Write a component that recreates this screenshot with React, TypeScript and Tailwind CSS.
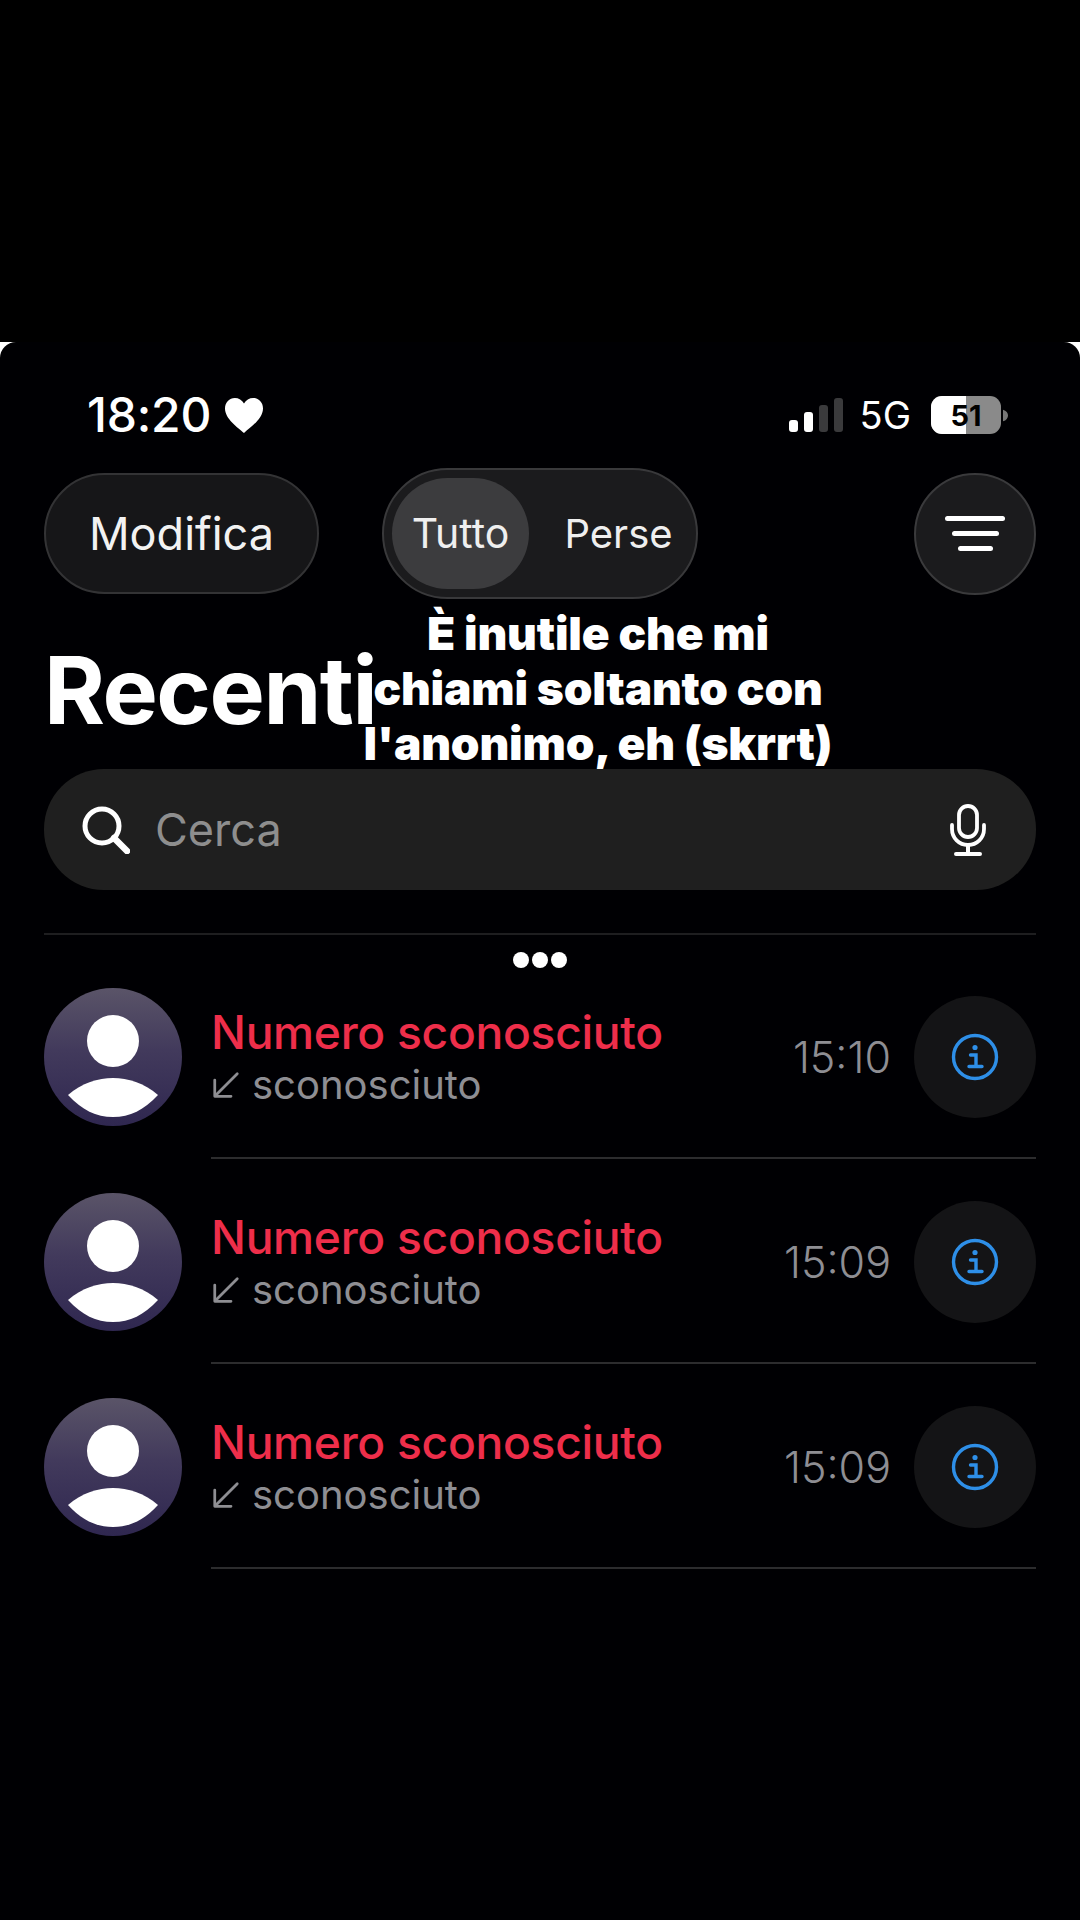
import React from "react";

const font = { fontFamily: "Inter, 'Liberation Sans', sans-serif" };

function Person({ id }: { id: string }) {
  return (
    <svg viewBox="0 0 138 138" className="w-[138px] h-[138px] shrink-0">
      <defs>
        <linearGradient id={id} x1="0" y1="0" x2="0" y2="1">
          <stop offset="0" stopColor="#5a5468" />
          <stop offset="0.45" stopColor="#423a5c" />
          <stop offset="1" stopColor="#2f2750" />
        </linearGradient>
      </defs>
      <circle cx="69" cy="69" r="69" fill={`url(#${id})`} />
      <circle cx="69" cy="53" r="26" fill="#fff" />
      <path d="M24 107 C38 95 54 90 69 90 C84 90 100 95 114 107 C100 122 86 129 69 129 C52 129 38 122 24 107 Z" fill="#fff" />
    </svg>
  );
}

function Row({ id, time }: { id: string; time: string }) {
  return (
    <div className="flex items-start h-[205px] pl-[44px] pr-[44px]">
      <div className="pt-[28px]">
        <Person id={id} />
      </div>
      <div className="ml-[29px] flex-1 h-[197px] border-b-2 border-[#2c2c2e] flex justify-between box-content">
        <div className="pt-[46px]">
          <div className="text-[46.2px] leading-[52px] font-medium text-[#ee2e4a] tracking-[-0.3px]">Numero sconosciuto</div>
          <div className="flex items-center mt-[2px] text-[#8e8e93]">
            <svg viewBox="0 0 24 24" className="w-[30px] h-[30px]" fill="none" stroke="currentColor" strokeWidth="2.2" strokeLinecap="round" strokeLinejoin="round">
              <path d="M21 3 L4 20" />
              <path d="M3 8 V21 H16" />
            </svg>
            <span className="ml-[11px] text-[40px] leading-[50px] font-normal">sconosciuto</span>
          </div>
        </div>
        <div className="flex items-center mb-[3px]">
          <span className="text-[43px] font-light text-[#8e8e93] mr-[23px]">{time}</span>
          <div className="w-[122px] h-[122px] rounded-full bg-[#141416] flex items-center justify-center">
            <svg viewBox="0 0 48 48" className="w-[48px] h-[48px]" fill="none" stroke="#2e8fe8" strokeWidth="3.4">
              <circle cx="24" cy="24" r="21.5" />
              <circle cx="24" cy="14.5" r="2.6" fill="#2e8fe8" stroke="none" />
              <path d="M19.5 22 H25 V33 M18 33.5 H31" strokeLinecap="round" />
            </svg>
          </div>
        </div>
      </div>
    </div>
  );
}

export default function App() {
  return (
    <div className="w-[1080px] h-[1920px] bg-black text-white overflow-hidden" style={font}>
      <div className="h-[342px] bg-black" />
      <div className="bg-white h-[1578px]">
        <div className="relative h-full bg-[#000003] rounded-t-[16px]">
          {/* status bar */}
          <div className="flex items-center justify-between h-[126px] pl-[87px] pr-[72px] pt-[20px]">
            <div className="flex items-center">
              <span className="text-[48px] font-medium tracking-[-0.2px]">18:20</span>
              <svg viewBox="0 0 24 22" className="w-[38px] h-[35px] ml-[14px]" fill="#fff">
                <path d="M12 22 C8 18.5 0 13 0 6.5 C0 2.8 2.8 0 6.2 0 C8.6 0 10.8 1.3 12 3.4 C13.2 1.3 15.4 0 17.8 0 C21.2 0 24 2.8 24 6.5 C24 13 16 18.5 12 22 Z" />
              </svg>
            </div>
            <div className="flex items-center">
              <div className="flex items-end gap-[6px] h-[34px] mr-[17px]">
                <div className="w-[9px] h-[12px] rounded-[3px] bg-white" />
                <div className="w-[9px] h-[20px] rounded-[3px] bg-white" />
                <div className="w-[9px] h-[27px] rounded-[3px] bg-[#3a3a3c]" />
                <div className="w-[9px] h-[34px] rounded-[3px] bg-[#3a3a3c]" />
              </div>
              <span className="text-[38px] font-normal leading-none">5G</span>
              <div className="relative w-[70px] h-[38px] ml-[20px] rounded-[11px] bg-[#8a8a8a] overflow-hidden">
                <div className="w-[35px] h-full bg-white" />
                <div className="absolute inset-0 flex items-center justify-center text-[29px] font-bold text-black leading-none">51</div>
              </div>
              <svg viewBox="0 0 6 14" className="w-[5px] h-[13px] ml-[2px]" fill="#777">
                <path d="M0 0 C4 1 6 4 6 7 C6 10 4 13 0 14 Z" />
              </svg>
            </div>
          </div>

          {/* toolbar */}
          <div className="flex items-center h-[131px] px-[44px]">
            <div className="w-[275px] h-[121px] rounded-full bg-[#161618] border-2 border-[#333335] flex items-center justify-center text-[45px] font-normal text-[#f2f2f2]">
              Modifica
            </div>
            <div className="w-[316px] h-[131px] ml-[63px] rounded-full bg-[#1b1b1d] border-2 border-[#39393b] flex items-center pl-[8px]">
              <div className="w-[137px] h-[111px] rounded-full bg-[#3c3c3e] flex items-center justify-center text-[41px] text-[#efefef]">Tutto</div>
              <div className="flex-1 text-center text-[40px] pl-[12px] text-[#efefef]">Perse</div>
            </div>
            <div className="ml-auto w-[122px] h-[122px] rounded-full bg-[#1b1b1d] border-2 border-[#3a3a3c] flex flex-col items-center justify-center gap-[10px]">
              <div className="w-[60px] h-[5px] rounded-full bg-white" />
              <div className="w-[47px] h-[5px] rounded-full bg-white" />
              <div className="w-[35px] h-[5px] rounded-full bg-white" />
            </div>
          </div>

          {/* title */}
          <div className="h-[170px] px-[44px] pt-[41px]">
            <div className="text-[93px] leading-[100px] font-bold tracking-[-1.5px]">Recenti</div>
          </div>

          {/* lyric overlay */}
          <div className="absolute left-[298px] w-[600px] top-[264px] text-center text-[46px] leading-[55px] font-black tracking-[-0.2px]">
            <div>È inutile che mi</div>
            <div>chiami soltanto con</div>
            <div>l'anonimo, eh (skrrt)</div>
          </div>

          {/* search */}
          <div className="relative mx-[44px] h-[121px] rounded-[60px] bg-[#1f1f1f] flex items-center pl-[38px] pr-[50px]">
            <svg viewBox="0 0 48 48" className="w-[48px] h-[48px]" fill="none" stroke="#fff" strokeWidth="5" strokeLinecap="round">
              <circle cx="20" cy="20" r="17" />
              <path d="M32 32 L45 45" strokeWidth="6.5" />
            </svg>
            <span className="ml-[25px] text-[45px] text-[#8e8e8e] font-normal flex-1">Cerca</span>
            <svg viewBox="0 0 36 52" className="w-[36px] h-[52px]" fill="none" stroke="#fff" strokeWidth="3.8" strokeLinecap="round">
              <rect x="9" y="2" width="18" height="31" rx="9" />
              <path d="M2 21 V25 C2 34 9 41 18 41 C27 41 34 34 34 25 V21" />
              <path d="M18 41 V49 M6 50 H30" strokeWidth="4" />
            </svg>
          </div>

          {/* divider + more dots */}
          <div className="mx-[44px] mt-[43px] h-[2px] bg-[#1e1e20]" />
          <div className="flex justify-center gap-[3px] mt-[17px] h-[16px]">
            <div className="w-[16px] h-[16px] rounded-full bg-white" />
            <div className="w-[16px] h-[16px] rounded-full bg-white" />
            <div className="w-[16px] h-[16px] rounded-full bg-white" />
          </div>

          <div className="mt-[-8px]">
            <Row id="a1" time="15:10" />
            <Row id="a2" time="15:09" />
            <Row id="a3" time="15:09" />
          </div>
        </div>
      </div>
    </div>
  );
}
